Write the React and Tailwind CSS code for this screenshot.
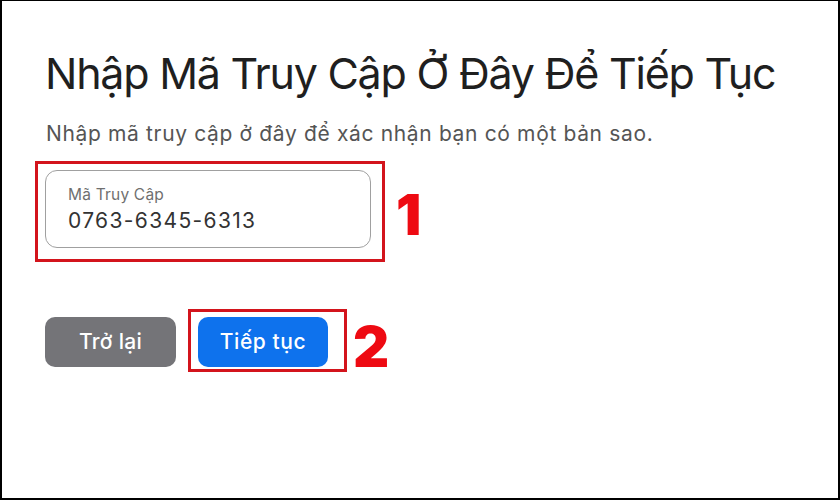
export default function App() {
  const font = { fontFamily: 'Inter, "Noto Sans", sans-serif' };
  return (
    <div
      className="w-[840px] h-[500px] bg-white border-t border-l-2 border-r-2 border-b-2 border-black flex flex-col text-[#232323]"
      style={font}
    >
      <h1 className="ml-[43px] mt-[46px] text-[43px] leading-[52px] font-normal tracking-[-1.25px] text-[#1f1f1f] whitespace-nowrap">
        Nhập Mã Truy Cập Ở Đây Để Tiếp Tục
      </h1>
      <p className="ml-[44px] mt-[23px] text-[21px] leading-[24px] tracking-[0.65px] text-[#555555] whitespace-nowrap">
        Nhập mã truy cập ở đây để xác nhận bạn có một bản sao.
      </p>
      <div className="flex items-center mt-[15px]">
        <div className="ml-[33px] border-[3px] border-[#d3141c] pt-[6px] pl-[7px] pr-[11px] pb-[11px]">
          <div className="w-[326px] h-[78px] rounded-[12px] border border-[#a0a0a0] flex flex-col pt-[15px] pl-[22px]">
            <div className="text-[15.5px] leading-[18px] tracking-[0.2px] text-[#6f6f6f]">Mã Truy Cập</div>
            <div className="mt-[3px] text-[21px] leading-[28px] text-[#333333] tracking-[1.35px]">0763-6345-6313</div>
          </div>
        </div>
        <div className="ml-[11px] mt-[7px] text-[56px] leading-none font-black text-[#ee0a12]">1</div>
      </div>
      <div className="flex items-start mt-[47px]">
        <button className="ml-[43px] mt-[8px] w-[131px] h-[50px] rounded-[10px] bg-[#747478] text-white text-[21px] tracking-[0.3px] font-medium">
          Trở lại
        </button>
        <div className="ml-[12px] border-[3px] border-[#d3141c] pt-[5px] pl-[7px] pr-[16px] pb-[2px]">
          <button className="w-[130px] h-[50px] rounded-[10px] bg-[#0e72ed] text-white text-[21px] tracking-[0.6px] font-medium block">
            Tiếp tục
          </button>
        </div>
        <div className="ml-[6px] self-center mt-[10px] text-[56px] leading-none font-black text-[#ee0a12]">2</div>
      </div>
    </div>
  );
}
